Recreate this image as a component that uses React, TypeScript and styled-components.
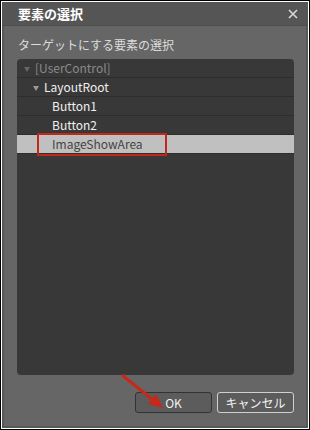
import React from "react";
import styled, { createGlobalStyle } from "styled-components";

const Global = createGlobalStyle`
  html, body { margin: 0; padding: 0; background: #fff; }
  * { box-sizing: border-box; }
`;

const Window = styled.div`
  position: relative;
  width: 310px;
  height: 430px;
  border: 1px solid #000;
  padding: 1px;
  background: #fff;
  font-family: "Noto Sans CJK JP", "Noto Sans", sans-serif;
`;

const Inner = styled.div`
  height: 100%;
  display: flex;
  flex-direction: column;
  background: #666;
  border: 2px solid #575757;
  border-top: none;
`;

const TitleBar = styled.div`
  height: 24px;
  flex: none;
  display: flex;
  align-items: center;
  justify-content: space-between;
  background: #555;
  border-bottom: 1px solid #4e4e4e;
  padding: 0 10px 0 16px;
  margin: 0 -2px;
`;

const Title = styled.div`
  color: #fff;
  font-size: 13px;
  font-weight: bold;
  line-height: 16px;
`;

const Content = styled.div`
  flex: 1;
  display: flex;
  flex-direction: column;
  padding: 0 12px 0 13px;
`;

const Label = styled.div`
  color: #dcdcdc;
  font-size: 12px;
  line-height: 20px;
  padding: 9px 0 4px 1px;
`;

const Tree = styled.div`
  height: 316px;
  background: #383838;
  border-radius: 4px;
  overflow: hidden;
`;

const Row = styled.div<{ $indent: number; $selected?: boolean }>`
  height: 19px;
  display: flex;
  align-items: center;
  padding-left: ${(p) => p.$indent}px;
  border-bottom: 1px solid #2d2d2d;
  background: ${(p) => (p.$selected ? "#c0c0c0" : "transparent")};
`;

const Arrow = styled.span<{ $dim?: boolean }>`
  width: 0;
  height: 0;
  border-left: 3px solid transparent;
  border-right: 3px solid transparent;
  border-top: 5px solid ${(p) => (p.$dim ? "#666" : "#999")};
  margin-right: 5px;
  margin-top: 2px;
`;

const RowText = styled.span<{ $tone: "dim" | "normal" | "selected" }>`
  font-size: 12px;
  line-height: 16px;
  color: ${(p) =>
    p.$tone === "dim" ? "#8a8a8a" : p.$tone === "selected" ? "#454545" : "#f0f0f0"};
`;

const Highlight = styled.span`
  display: inline-flex;
  align-items: center;
  height: 23px;
  margin-left: -15px;
  padding: 0 22px 0 13px;
  border: 2px solid #c0281a;
`;

const Buttons = styled.div`
  display: flex;
  justify-content: flex-end;
  gap: 5px;
  padding-top: 17px;
`;

const Button = styled.button<{ $light?: boolean }>`
  width: 77px;
  height: 21px;
  border-radius: 3px;
  border: 1px solid ${(p) => (p.$light ? "#d0d0d0" : "#333")};
  background: #5c5c5c;
  color: #f2f2f2;
  font-family: "Noto Sans CJK JP", "Noto Sans", sans-serif;
  font-size: 12px;
  padding: 0;
  line-height: 18px;
`;

const Overlay = styled.svg`
  position: absolute;
  left: 0;
  top: 0;
  pointer-events: none;
`;

const CloseIcon = () => (
  <svg width="10" height="10" viewBox="0 0 10 10">
    <path d="M1 1L9 9M9 1L1 9" stroke="#d8d8d8" strokeWidth="1.6" />
  </svg>
);

export default function App() {
  return (
    <>
      <Global />
      <Window>
        <Inner>
          <TitleBar>
            <Title>要素の選択</Title>
            <CloseIcon />
          </TitleBar>
          <Content>
            <Label>ターゲットにする要素の選択</Label>
            <Tree>
              <Row $indent={7}>
                <Arrow $dim />
                <RowText $tone="dim">[UserControl]</RowText>
              </Row>
              <Row $indent={16}>
                <Arrow />
                <RowText $tone="normal">LayoutRoot</RowText>
              </Row>
              <Row $indent={35}>
                <RowText $tone="normal">Button1</RowText>
              </Row>
              <Row $indent={35}>
                <RowText $tone="normal">Button2</RowText>
              </Row>
              <Row $indent={35} $selected>
                <Highlight>
                  <RowText $tone="selected">ImageShowArea</RowText>
                </Highlight>
              </Row>
            </Tree>
            <Buttons>
              <Button>OK</Button>
              <Button $light>キャンセル</Button>
            </Buttons>
          </Content>
        </Inner>
        <Overlay width="310" height="430" viewBox="0 0 310 430">
          <line x1="121" y1="374" x2="152" y2="399" stroke="#c8281a" strokeWidth="3" />
          <polygon points="162,407 155,393 147,403" fill="#c8281a" />
        </Overlay>
      </Window>
    </>
  );
}
